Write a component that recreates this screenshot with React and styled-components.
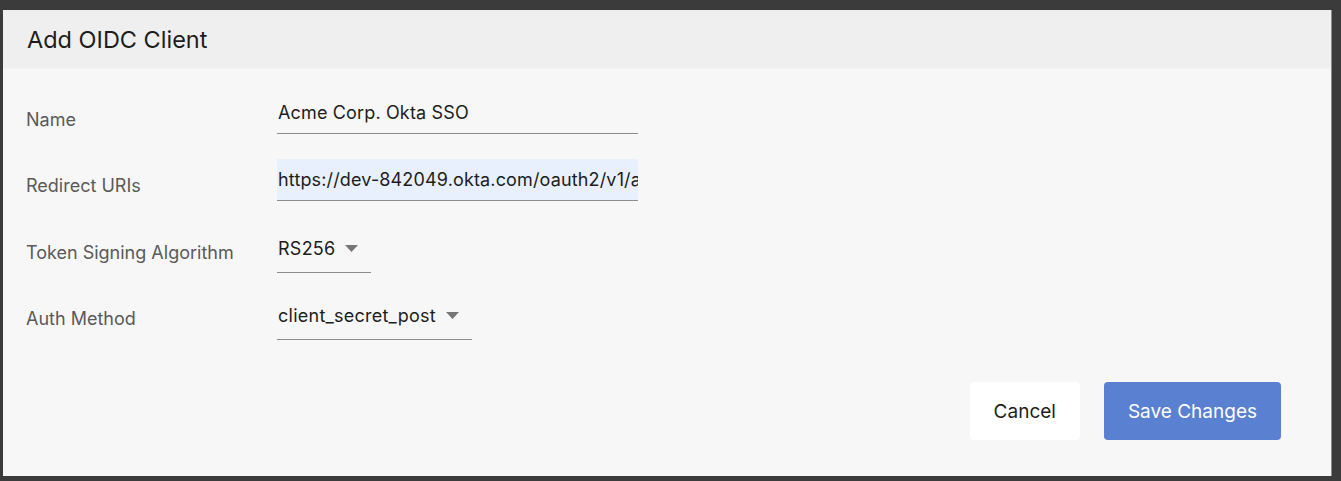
import React from 'react';
import styled, { createGlobalStyle } from 'styled-components';

const GlobalStyle = createGlobalStyle`
  html, body {
    margin: 0;
    padding: 0;
    background: #3b3b3b;
  }
  body {
    font-family: 'Inter', 'Noto Sans', sans-serif;
  }
`;

const Backdrop = styled.div`
  width: 1341px;
  height: 481px;
  box-sizing: border-box;
  padding: 10px 9px 5px 3px;
  background: #3b3b3b;
`;

const Dialog = styled.div`
  height: 100%;
  display: flex;
  flex-direction: column;
  background: #f7f7f7;
  border-right: 1px solid #8a8a8a;
  box-sizing: border-box;
`;

const Header = styled.div`
  height: 58px;
  display: flex;
  align-items: center;
  padding: 0 24px;
  background: #efefef;
  border-bottom: 1px solid #f2f2f2;
`;

const Title = styled.h2`
  margin: 0;
  font-size: 23.5px;
  font-weight: 400;
  color: #1d1d1d;
`;

const Body = styled.div`
  padding: 17px 50px 0 23px;
  display: flex;
  flex-direction: column;
`;

const Row = styled.div`
  height: 66.5px;
  display: flex;
  align-items: center;
`;

const Label = styled.label`
  width: 251px;
  flex: none;
  font-size: 18px;
  color: #5a5a5a;
`;

const TextInput = styled.input`
  width: 361px;
  height: 42px;
  box-sizing: border-box;
  margin-bottom: 12px;
  padding: 0 0 0 1px;
  border: none;
  border-bottom: 1.5px solid #8c8c8c;
  background: ${(p) => (p.$autofilled ? '#e8f0fe' : 'transparent')};
  font-family: inherit;
  font-size: 18px;
  letter-spacing: 0.15px;
  color: #1d1d1d;
  outline: none;
`;

const Select = styled.div`
  width: ${(p) => p.$width}px;
  height: 48px;
  box-sizing: border-box;
  margin-bottom: 6px;
  padding-left: 1px;
  display: flex;
  align-items: center;
  gap: 10px;
  border-bottom: 1.5px solid #8c8c8c;
  font-size: 18px;
  letter-spacing: 0.25px;
  color: #1d1d1d;
`;

const Caret = () => (
  <svg width="13" height="7" viewBox="0 0 13 7">
    <path d="M0 0 H13 L6.5 7 Z" fill="#767676" />
  </svg>
);

const Footer = styled.div`
  display: flex;
  justify-content: flex-end;
  gap: 24px;
  padding: 30px 50px 0 0;
`;

const Button = styled.button`
  height: 58px;
  padding: 0 24px;
  border: none;
  border-radius: 4px;
  font-family: inherit;
  font-size: 19px;
  background: ${(p) => (p.$primary ? '#5a80d2' : '#ffffff')};
  color: ${(p) => (p.$primary ? '#ffffff' : '#1d1d1d')};
  cursor: pointer;
`;

export default function App() {
  return (
    <>
      <GlobalStyle />
      <Backdrop>
        <Dialog>
          <Header>
            <Title>Add OIDC Client</Title>
          </Header>
          <Body>
            <Row>
              <Label>Name</Label>
              <TextInput defaultValue="Acme Corp. Okta SSO" />
            </Row>
            <Row>
              <Label>Redirect URIs</Label>
              <TextInput $autofilled defaultValue="https://dev-842049.okta.com/oauth2/v1/authorize/callback" />
            </Row>
            <Row>
              <Label>Token Signing Algorithm</Label>
              <Select $width={94}>
                RS256 <Caret />
              </Select>
            </Row>
            <Row>
              <Label>Auth Method</Label>
              <Select $width={195}>
                client_secret_post <Caret />
              </Select>
            </Row>
          </Body>
          <Footer>
            <Button>Cancel</Button>
            <Button $primary>Save Changes</Button>
          </Footer>
        </Dialog>
      </Backdrop>
    </>
  );
}
